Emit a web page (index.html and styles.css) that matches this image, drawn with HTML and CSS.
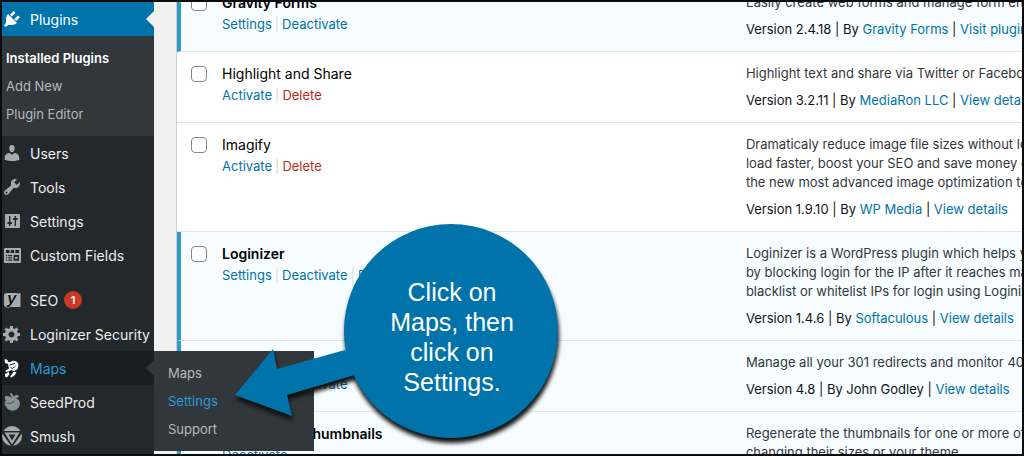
FILE: index.html
```html
<!DOCTYPE html>
<html lang="en">
<head>
<meta charset="UTF-8">
<meta name="viewport" content="width=device-width, initial-scale=1.0">
<title>Plugins</title>
<link rel="stylesheet" href="styles.css">
</head>
<body>

<div class="screen">
    <nav class="sidebar">
        <ul class="menu">
            <li class="item current">
                <a href="#"><svg class="icon" viewBox="0 0 20 20"><path d="M13.11 4.36L9.87 7.6 8 5.73l3.24-3.24c.35-.34 1.05-.2 1.56.32.52.51.66 1.21.31 1.55zm-8 1.77l.91-1.12 9.01 9.01-1.19.84c-.71.71-2.63 1.16-3.82 1.16H6.14L4.9 17.26c-.59.59-1.54.59-2.12 0-.59-.58-.59-1.53 0-2.12l1.24-1.24v-3.88c0-1.13.4-3.19 1.09-3.89zm7.26 3.97l3.24-3.24c.34-.35 1.04-.21 1.55.31.52.51.66 1.21.31 1.55l-3.24 3.25z"/></svg>Plugins</a>
            </li>
            <li>
                <ul class="submenu">
                    <li><a class="selected" href="#">Installed Plugins</a></li>
                    <li><a href="#">Add New</a></li>
                    <li><a href="#">Plugin Editor</a></li>
                </ul>
            </li>
            <li class="item">
                <a href="#"><svg class="icon" viewBox="0 0 20 20"><path d="M10 9.25c-2.27 0-2.73-3.44-2.73-3.44C7 4.02 7.82 2 9.97 2c2.16 0 2.98 2.02 2.71 3.81 0 0-.41 3.44-2.68 3.44zm0 2.57L12.72 10c2.39 0 4.52 2.33 4.52 4.53v2.49s-3.65 1.13-7.24 1.13c-3.65 0-7.24-1.13-7.24-1.13v-2.49c0-2.25 1.94-4.48 4.47-4.48z"/></svg>Users</a>
            </li>
            <li class="item">
                <a href="#"><svg class="icon" viewBox="0 0 20 20"><path d="M16.68 9.77c-1.34 1.34-3.3 1.67-4.95.99l-5.41 6.52c-.99.99-2.59.99-3.58 0s-.99-2.59 0-3.57l6.52-5.42c-.68-1.65-.35-3.61.99-4.95 1.28-1.28 3.12-1.62 4.72-1.06l-2.89 2.89 2.82 2.82 2.86-2.87c.53 1.58.18 3.39-1.08 4.65zM3.81 16.21c.4.39 1.04.39 1.43 0 .4-.4.4-1.04 0-1.43-.39-.4-1.03-.4-1.43 0-.39.39-.39 1.03 0 1.43z"/></svg>Tools</a>
            </li>
            <li class="item">
                <a href="#"><svg class="icon" viewBox="0 0 20 20"><rect x="3" y="3" width="15" height="14" rx="1"/><path class="cut" d="M7 5h1.4v6H10v2H8.4v2H7v-2H5.400v-2H7zM12.6 5H14v2h1.6v2H14v6h-1.4V9H11V7h1.6z"/></svg>Settings</a>
            </li>
            <li class="item">
                <a href="#"><svg class="icon" viewBox="0 0 20 20"><rect x="2" y="3" width="17" height="15" rx="1"/><path class="cut" d="M4 5h3.5v3H4zM8.700 5h3.500v3H8.700zM13.400 5H17v3h-3.600zM4 10h1.200v1.200H4zM6.200 10H10v1.200H6.200zM4 12.300h1.200v1.200H4zM6.200 12.300H10v1.200H6.200zM4 14.600h1.200v1.200H4zM6.200 14.600H10v1.200H6.200zM11.500 10H17v5.800h-5.500z"/><rect x="13" y="12" width="2.5" height="2"/></svg>Custom Fields</a>
            </li>
            <li class="item first">
                <a href="#"><svg class="icon" viewBox="0 0 20 20"><path d="M4.500 3H12.500L16 3.500 18.500 3V17H5Q2 17 2 14.500V5.500Q2 3 4.500 3z"/><text class="mark" x="5" y="14">y</text></svg>SEO <span class="count">1</span></a>
            </li>
            <li class="item">
                <a href="#"><svg class="icon" viewBox="0 0 20 20"><path d="M18 12h-2.180c-.17.7-.44 1.350-.81 1.930l1.540 1.540-2.100 2.100-1.540-1.540c-.58.36-1.230.63-1.910.79V19H8v-2.180c-.68-.16-1.330-.43-1.910-.79l-1.540 1.540-2.120-2.120 1.540-1.540c-.36-.58-.63-1.230-.79-1.910H1V9.030h2.170c.16-.7.44-1.350.8-1.940L2.430 5.550l2.100-2.100 1.540 1.540c.58-.37 1.240-.64 1.930-.81V2h3v2.180c.68.16 1.330.43 1.910.79l1.540-1.540 2.120 2.120-1.540 1.540c.36.59.64 1.240.8 1.940H18V12zm-8.500 1.500c1.660 0 3-1.340 3-3s-1.340-3-3-3-3 1.340-3 3 1.340 3 3 3z"/></svg>Loginizer Security</a>
            </li>
            <li class="item open">
                <a href="#"><svg class="icon" viewBox="0 0 20 20"><path d="M2.500 1.500C4.500.5 6 2 6 3.500L8 4.500C10 2 14 2.500 16 5c.8 2 .3 5-1 6.500l-3 1.500-3-1-2.500 1.500-2.500.5-.5-1.500L7 10.500 6 6 3 5z"/><path d="M3 16l3.500-2 1 2L5 19.500 3 18.500zM8 18.500l4-5 2.500.5-1.500 3-3.500 2.500z"/><path class="eyes" d="M7.500 7 13 5.500M8.500 9.500l2 1 3-2.500"/></svg>Maps</a>
                <ul class="flyout">
                    <li><a href="#">Maps</a></li>
                    <li><a class="hover" href="#">Settings</a></li>
                    <li><a href="#">Support</a></li>
                </ul>
            </li>
            <li class="item">
                <a href="#"><svg class="icon dim" viewBox="0 0 20 20"><path d="M10 6C8.500 3.500 8 2.500 8 1c2 0 3 1.500 3.500 3.500C13 3 15 2.500 17 3.500c-.5 2-1.500 2.500-3 3 3 .5 4.200 3 3.800 5.800C17 17 13 19.500 9 18.500 6 18 4.500 16 4 14L2 13l1.500-1L2 9.500l2 .3C3.500 8 2.500 6.500 3 4.500 5 3.500 8 4.500 10 6z"/><path class="crease" d="M4.500 11q5 2 8-2"/></svg>SeedProd</a>
            </li>
            <li class="item">
                <a href="#"><svg class="icon" viewBox="0 0 20 20"><circle cx="10" cy="10" r="10"/><path class="cut" d="M0 5h20v2L11 20H9L0 7z"/><path fill-rule="evenodd" d="M2.500 6.500h15L10 18.500zM6.500 8.500 10 14.500l3.500-6z"/></svg>Smush</a>
            </li>
        </ul>
    </nav>

    <main class="content">
        <table class="plugins">
            <tr class="active">
                <td class="check"><input type="checkbox" aria-label="Select Gravity Forms"></td>
                <td class="name"><strong>Gravity Forms</strong>
                    <div class="actions"><a href="#">Settings</a><i>|</i><a href="#">Deactivate</a></div></td>
                <td class="desc"><p>Easily create web forms and manage form entries within the admin.</p>
                    <div class="meta">Version 2.4.18 | By <a href="#">Gravity Forms</a> | <a href="#">Visit plugin site</a></div></td>
            </tr>
            <tr>
                <td class="check"><input type="checkbox" aria-label="Select Highlight and Share"></td>
                <td class="name"><strong>Highlight and Share</strong>
                    <div class="actions"><a href="#">Activate</a><i>|</i><a class="delete" href="#">Delete</a></div></td>
                <td class="desc"><p>Highlight text and share via Twitter or Facebook and more.</p>
                    <div class="meta">Version 3.2.11 | By <a href="#">MediaRon LLC</a> | <a href="#">View details</a></div></td>
            </tr>
            <tr>
                <td class="check"><input type="checkbox" aria-label="Select Imagify"></td>
                <td class="name"><strong>Imagify</strong>
                    <div class="actions"><a href="#">Activate</a><i>|</i><a class="delete" href="#">Delete</a></div></td>
                <td class="desc"><p>Dramaticaly reduce image file sizes without losing quality, make your website<br>load faster, boost your SEO and save money on your bandwidth using<br>the new most advanced image optimization tool.</p>
                    <div class="meta">Version 1.9.10 | By <a href="#">WP Media</a> | <a href="#">View details</a></div></td>
            </tr>
            <tr class="active">
                <td class="check"><input type="checkbox" aria-label="Select Loginizer"></td>
                <td class="name"><strong>Loginizer</strong>
                    <div class="actions"><a href="#">Settings</a><i>|</i><a href="#">Deactivate</a><i>|</i><a href="#">Docs</a></div></td>
                <td class="desc"><p>Loginizer is a WordPress plugin which helps you fight against bruteforce attack<br>by blocking login for the IP after it reaches maximum retries allowed. You can<br>blacklist or whitelist IPs for login using Loginizer.</p>
                    <div class="meta">Version 1.4.6 | By <a href="#">Softaculous</a> | <a href="#">View details</a></div></td>
            </tr>
            <tr class="active">
                <td class="check"><input type="checkbox" aria-label="Select Redirection"></td>
                <td class="name"><strong>Redirection</strong>
                    <div class="actions"><a href="#">Settings</a><i>|</i><a href="#">Deactivate</a></div></td>
                <td class="desc"><p>Manage all your 301 redirects and monitor 404 errors</p>
                    <div class="meta">Version 4.8 | By John Godley | <a href="#">View details</a></div></td>
            </tr>
            <tr class="active">
                <td class="check"><input type="checkbox" aria-label="Select Regenerate Thumbnails"></td>
                <td class="name"><strong>Regenerate Thumbnails</strong>
                    <div class="actions"><a href="#">Deactivate</a></div></td>
                <td class="desc"><p>Regenerate the thumbnails for one or more of your image uploads. Useful when<br>changing their sizes or your theme.</p></td>
            </tr>
        </table>
    </main>

    <div class="callout">
        <svg class="shape" viewBox="0 0 330 230">
            <path d="M4 174 42 128 46 148 114 129 124 154 56 174 61 195z"/>
            <circle cx="220" cy="110" r="107"/>
        </svg>
        <p class="note">Click on<br>Maps, then<br>click on<br>Settings.</p>
    </div>
</div>

</body>
</html>
```
FILE: styles.css
```css
* {
    box-sizing: border-box;
}

body {
    margin: 0;
    font-family: Inter, "Liberation Sans", sans-serif;
    font-size: 13px;
    line-height: 19px;
    color: #32373c;
    background-color: #f1f1f1;
}

a {
    color: #0073aa;
    text-decoration: none;
}

ul {
    list-style: none;
    margin: 0;
    padding: 0;
}

.screen {
    position: relative;
    display: flex;
    height: 100vh;
    border: 2px solid #0a0b0d;
    overflow: hidden;
}

/* admin menu */
.sidebar {
    flex: 0 0 152px;
    background-color: #23282d;
    z-index: 1;
}

.item {
    position: relative;
}

.item > a {
    display: flex;
    align-items: center;
    gap: 8px;
    height: 34px;
    font-size: 14px;
    color: #eee;
    white-space: nowrap;
}

.first {
    margin-top: 11px;
}

.icon {
    flex: none;
    width: 20px;
    height: 20px;
    fill: #a5aaaf;
}

.icon .cut {
    fill: #23282d;
}

.icon .mark {
    font: italic bold 17px "Liberation Sans", sans-serif;
    fill: #16191c;
    stroke: #d4d7da;
    stroke-width: 1;
    paint-order: stroke;
}

.icon .eyes {
    fill: none;
    stroke: #191e23;
}

.icon .crease {
    fill: none;
    stroke: #4b5359;
}

.icon.dim {
    fill: #8a9299;
}

.current > a {
    color: #fff;
    background-color: #0073aa;
}

.current .icon,
.open .icon {
    fill: #fff;
}

.open > a {
    color: #2e9ad0;
    background-color: #191e23;
}

.current::after,
.open::before {
    content: "";
    position: absolute;
    right: 0;
    top: 9px;
    border: 8px solid transparent;
    border-left-width: 0;
    border-right-color: #f1f1f1;
}

.open::before {
    border-right-color: #32373c;
}

.count {
    width: 18px;
    height: 18px;
    border-radius: 9px;
    margin-left: -2px;
    background-color: #c83822;
    color: #fff;
    font-size: 11px;
    font-weight: 600;
    line-height: 18px;
    text-align: center;
}

.submenu,
.flyout {
    padding: 8px 0;
    background-color: #32373c;
}

.submenu a,
.flyout a {
    display: block;
    padding: 0 4px;
    line-height: 28px;
    color: #b4b9be;
}

.submenu .selected {
    font-weight: 600;
    color: #fff;
}

.flyout {
    position: absolute;
    left: 100%;
    top: 0;
    width: 160px;
}

.flyout a {
    padding: 0 14px;
}

.flyout .hover {
    color: #2e9ad0;
}

/* plugin list, scrolled part of the way down */
.content {
    flex: 1;
    min-width: 0;
    padding-left: 22px;
    overflow: hidden;
}

.plugins {
    width: 100%;
    margin-top: -21px;
    table-layout: fixed;
    border-collapse: separate;
    border-spacing: 0;
    border-left: 1px solid #ccd0d4;
    background-color: #fff;
}

.plugins td {
    padding: 12px 0;
    border-bottom: 1px solid #e1e5e8;
    vertical-align: top;
    white-space: nowrap;
}

.plugins .check {
    width: 45px;
    padding-left: 14px;
}

.plugins .name {
    width: 62%;
}

.active td {
    background-color: #f7fcfe;
}

.active .check {
    padding-left: 10px;
    border-left: 4px solid #2e9ac8;
}

.check input {
    display: block;
    appearance: none;
    width: 16px;
    height: 16px;
    margin: 2px 0;
    border: 1px solid #7e8993;
    border-radius: 4px;
    background-color: #fff;
}

.name strong {
    display: block;
    font-size: 14px;
    font-weight: 400;
    color: #000;
}

.active strong {
    font-weight: 600;
}

.actions {
    padding-top: 3px;
}

.actions i {
    padding: 0 3px;
    font-style: normal;
    color: #ddd;
}

.actions .delete {
    color: #bc2a1c;
}

.desc p {
    margin: 0 0 8px;
}

.meta {
    color: #101417;
}

/* instruction bubble with arrow */
.callout {
    position: absolute;
    left: 229px;
    top: 219px;
    width: 330px;
    z-index: 2;
}

.shape {
    display: block;
    width: 100%;
    fill: #0073aa;
    filter: drop-shadow(1px 5px 2px #111);
}

.note {
    position: absolute;
    top: 56px;
    right: 2px;
    width: 214px;
    margin: 0;
    font-family: "Liberation Sans", sans-serif;
    font-size: 25px;
    line-height: 30px;
    text-align: center;
    color: #fff;
}
```
